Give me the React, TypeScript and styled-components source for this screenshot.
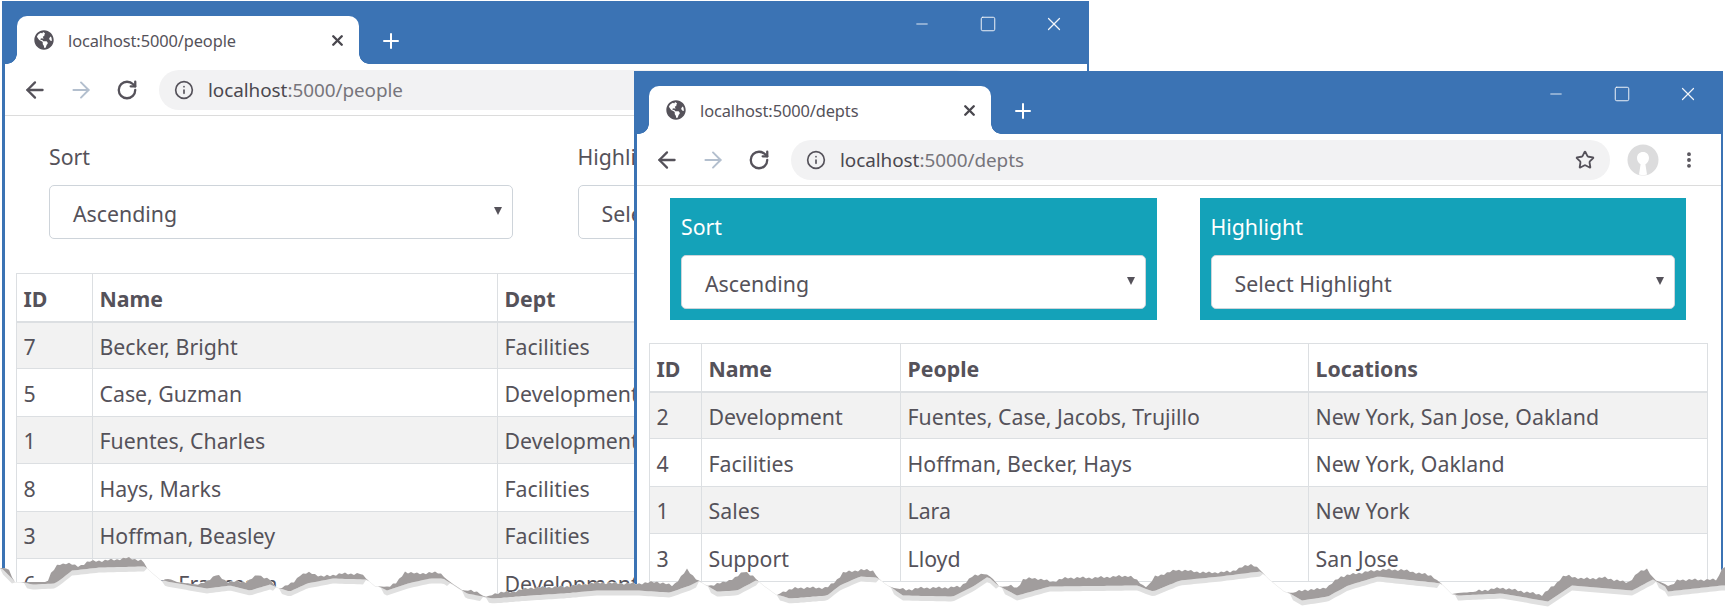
import React from "react";
import styled, { createGlobalStyle } from "styled-components";
import { ArrowLeft, ArrowRight, RotateCw, Info, Star, X, Plus, Minus, Square, EllipsisVertical } from "lucide-react";
import { FaGlobeAmericas } from "react-icons/fa";

const BLUE = "#3b73b4";
const TEXT = "#55525a";
const LINE = "#dcdfe2";

const Global = createGlobalStyle`
  html, body { margin: 0; padding: 0; background: #fff; }
  body { font-family: "Noto Sans", "Open Sans", sans-serif; color: ${TEXT}; }
`;

const Page = styled.div`
  position: relative;
  width: 1725px;
  height: 611px;
  overflow: hidden;
  background: #fff;
`;

const BrowserWindow = styled.section<{ $left: number; $top: number; $width: number }>`
  position: absolute;
  left: ${(p) => p.$left}px;
  top: ${(p) => p.$top}px;
  width: ${(p) => p.$width}px;
  height: 611px;
  box-sizing: border-box;
  border-left: 3px solid ${BLUE};
  border-right: 2px solid ${BLUE};
  background: #fff;
  display: flex;
  flex-direction: column;
`;

const TitleBar = styled.header`
  height: 63px;
  flex: none;
  background: ${BLUE};
  display: flex;
  padding-left: 12px;
`;

const Tab = styled.div`
  position: relative;
  align-self: flex-end;
  width: 342px;
  height: 48px;
  box-sizing: border-box;
  background: #fff;
  border-radius: 10px 10px 0 0;
  display: flex;
  align-items: center;
  padding: 0 13px 0 17px;
  gap: 14px;
  &::before, &::after {
    content: "";
    position: absolute;
    bottom: 0;
    width: 10px;
    height: 10px;
  }
  &::before { left: -10px; background: radial-gradient(circle at 0 0, ${BLUE} 9.5px, #fff 10px); }
  &::after { right: -10px; background: radial-gradient(circle at 100% 0, ${BLUE} 9.5px, #fff 10px); }
`;

const TabTitle = styled.span`
  font-size: 16.4px;
  flex: 1;
  color: ${TEXT};
  letter-spacing: -0.1px;
  white-space: nowrap;
`;

const NewTab = styled.div`
  align-self: flex-end;
  height: 46px;
  display: flex;
  align-items: center;
  margin-left: 20px;
  color: #fff;
`;

const Controls = styled.div`
  margin-left: auto;
  height: 46px;
  display: flex;
  color: #f2f5f9;
`;

const ControlButton = styled.div`
  width: 66px;
  display: flex;
  align-items: center;
  justify-content: center;
`;

const Toolbar = styled.div`
  height: 52px;
  flex: none;
  box-sizing: border-box;
  border-bottom: 1px solid #dcdcdc;
  display: flex;
  align-items: center;
  padding: 0 22px 0 7px;
`;

const NavButton = styled.div<{ $muted?: boolean }>`
  width: 46px;
  display: flex;
  justify-content: center;
  color: ${(p) => (p.$muted ? "#b3bfce" : "#55525a")};
`;

const Address = styled.div`
  flex: 1;
  height: 40px;
  margin-left: 9px;
  box-sizing: border-box;
  background: #f2f2f3;
  border-radius: 20px;
  display: flex;
  align-items: center;
  padding: 0 15px 0 15px;
  gap: 14px;
  color: #55525a;
`;

const Url = styled.span`
  flex: 1;
  font-size: 18.9px;
  letter-spacing: -0.05px;
  white-space: nowrap;
  color: #77757b;
  & b { font-weight: 400; color: #4a484f; }
`;

const Avatar = styled.div`
  width: 32px;
  height: 32px;
  margin-left: 17px;
  display: flex;
`;

const Menu = styled.div`
  width: 20px;
  margin-left: 20px;
  display: flex;
  justify-content: center;
  color: #55525a;
`;

const Content = styled.main`
  padding: 12px 11px 0;
`;

const Filters = styled.div`
  display: grid;
  grid-template-columns: 1fr 1fr;
  gap: 43px;
  padding: 0 24px 0 22px;
`;

const Panel = styled.div<{ $filled?: boolean }>`
  height: 122px;
  box-sizing: border-box;
  padding: 11px 11px 10px;
  background: ${(p) => (p.$filled ? "#14a2b9" : "transparent")};
  color: ${(p) => (p.$filled ? "#fff" : TEXT)};
  display: flex;
  flex-direction: column;
`;

const Label = styled.div`
  height: 46px;
  line-height: 36px;
  font-size: 21.3px;
`;

const SelectBox = styled.div`
  height: 54px;
  box-sizing: border-box;
  background: #fff;
  border: 1px solid #ced4da;
  border-radius: 5px;
  display: flex;
  align-items: center;
  justify-content: space-between;
  padding: 2px 10px 0 23px;
  color: ${TEXT};
  font-size: 21.3px;
`;

const Caret = styled.span`
  width: 0;
  height: 0;
  margin-bottom: 5px;
  border-left: 4px solid transparent;
  border-right: 4px solid transparent;
  border-top: 8px solid #55525a;
`;

const Table = styled.table<{ $inset?: boolean }>`
  margin: 23px 0 0 ${(p) => (p.$inset ? 1 : 0)}px;
  width: calc(100% - ${(p) => (p.$inset ? 3 : 0)}px);
  table-layout: fixed;
  border-collapse: collapse;
  font-size: 21.3px;
  color: ${TEXT};
`;

const Th = styled.th`
  height: 48px;
  padding: 2px 6.5px 0;
  box-sizing: border-box;
  border: 1px solid ${LINE};
  border-bottom-width: 2px;
  text-align: left;
  font-weight: 700;
  white-space: nowrap;
`;

const Td = styled.td`
  height: 47.4px;
  padding: 2px 6.5px 0;
  box-sizing: border-box;
  border: 1px solid ${LINE};
  white-space: nowrap;
`;

const Tr = styled.tr`
  tbody &:nth-child(odd) { background: #f2f2f2; }
`;

const TearLayer = styled.svg`
  position: absolute;
  left: 0;
  top: 0;
  width: 1725px;
  height: 611px;
`;

type Pt = [number, number];

const TOP: Pt[] = [[0,568],[8,568],[14,582],[25,582],[47,582],[50,575],[58,565],[67,563],[78,567],[88,562],[100,561],[115,560],[127,558],[143,561],[147,568],[157,577],[162,581],[167,578],[177,582],[200,585],[217,575],[227,582],[247,582],[258,575],[270,580],[277,588],[282,588],[293,583],[300,575],[310,573],[323,577],[340,574],[360,574],[368,580],[375,586],[387,587],[397,583],[405,572],[417,574],[430,573],[440,573],[445,578],[453,584],[462,590],[477,592],[485,597],[497,593],[513,592],[530,588],[563,587],[597,583],[637,584],[657,582],[673,586],[680,578],[687,570],[695,578],[700,581],[707,586],[723,583],[737,577],[745,571],[755,578],[763,585],[777,595],[783,592],[797,588],[827,588],[835,582],[843,573],[860,570],[873,571],[878,578],[887,585],[893,588],[907,590],[923,588],[942,588],[960,587],[972,577],[985,573],[992,578],[1000,587],[1010,586],[1017,588],[1023,580],[1033,578],[1052,582],[1067,578],[1093,578],[1130,576],[1140,583],[1147,588],[1155,577],[1177,570],[1207,573],[1230,572],[1252,564],[1260,570],[1270,580],[1285,592],[1292,593],[1305,590],[1315,590],[1328,587],[1340,577],[1360,573],[1380,570],[1402,570],[1432,576],[1442,584],[1452,594],[1458,593],[1472,592],[1502,588],[1542,595],[1555,585],[1562,577],[1568,576],[1582,579],[1605,578],[1628,583],[1638,573],[1647,569],[1655,580],[1665,584],[1672,586],[1678,580],[1712,580],[1718,580],[1721,568],[1725,568]];

const BOTTOM: Pt[] = [[0,568],[14,582],[33,586],[55,585],[62,580],[72,572],[100,569],[143,568],[147,568],[162,581],[167,583],[207,590],[230,587],[250,592],[270,586],[277,589],[290,593],[307,585],[333,580],[367,581],[375,586],[387,592],[408,585],[430,580],[443,580],[453,586],[467,595],[493,600],[530,597],[563,595],[597,592],[637,592],[670,594],[690,587],[700,582],[707,587],[717,593],[737,592],[758,581],[763,586],[777,596],[790,600],[827,597],[840,587],[860,578],[877,579],[887,586],[903,597],[953,598],[973,588],[988,578],[998,587],[1017,597],[1050,588],[1137,587],[1153,593],[1180,582],[1220,578],[1260,573],[1270,580],[1285,592],[1302,602],[1328,598],[1348,587],[1378,578],[1442,585],[1452,595],[1458,597],[1502,595],[1548,603],[1572,587],[1632,592],[1653,581],[1665,588],[1668,593],[1722,587],[1725,587]];

const at = (pts: Pt[], x: number) => {
  for (let i = 1; i < pts.length; i++) {
    if (x <= pts[i][0]) {
      const [x0, y0] = pts[i - 1];
      const [x1, y1] = pts[i];
      return y0 + ((y1 - y0) * (x - x0)) / Math.max(1, x1 - x0);
    }
  }
  return pts[pts.length - 1][1];
};

const samples = Array.from({ length: 576 }, (_, i) => {
  const x = Math.min(i * 3, 1725);
  const top = at(TOP, x);
  const band = Math.max(at(BOTTOM, x) - 1.5, top);
  const teeth = band - top > 3 ? [0, -1.5, 0.5, -0.5, 1, -1][i % 6] : 0;
  return { x, top: top + teeth, band, shade: band + (band - top > 1 ? 5 : 0.5) };
});

const line = (key: "top" | "band" | "shade") => samples.map((s) => `${s.x},${s[key].toFixed(1)}`);
const ribbon = (a: "top" | "band", b: "band" | "shade") => [...line(a), ...line(b).reverse()].join(" ");
const cover = [...line("top"), "1725,611", "0,611"].join(" ");

const Tear = () => (
  <TearLayer viewBox="0 0 1725 611">
    <polygon points={cover} fill="#fff" />
    <polygon points={ribbon("band", "shade")} fill="#e0e0e0" />
    <polygon points={ribbon("top", "band")} fill="#a19d9d" />
  </TearLayer>
);

const AvatarIcon = () => (
  <svg width="32" height="32" viewBox="0 0 32 32">
    <circle cx="16" cy="16" r="15.5" fill="#dcdcdd" />
    <path d="M16 8c-3.6 0-6 2.6-6 6 0 3 1.6 5.2 3.6 6.2L12 30.5c2.6 1 5.4 1 8 0l-1.6-10.3c2-1 3.6-3.2 3.6-6.2 0-3.4-2.4-6-6-6z" fill="#fff" />
  </svg>
);

type Row = string[];

interface BrowserProps {
  path: string;
  left: number;
  top: number;
  width: number;
  filled?: boolean;
  columns: number[];
  head: Row;
  rows: Row[];
}

const Browser = ({ path, left, top, width, filled, columns, head, rows }: BrowserProps) => (
  <BrowserWindow $left={left} $top={top} $width={width}>
    <TitleBar>
      <Tab>
        <FaGlobeAmericas size={20} color="#55525a" />
        <TabTitle>localhost:5000/{path}</TabTitle>
        <X size={17} strokeWidth={3.4} color="#4a484f" />
      </Tab>
      <NewTab>
        <Plus size={24} strokeWidth={2} />
      </NewTab>
      <Controls>
        <ControlButton><Minus size={18} strokeWidth={1.2} /></ControlButton>
        <ControlButton><Square size={18} strokeWidth={1.3} /></ControlButton>
        <ControlButton><X size={22} strokeWidth={1.3} /></ControlButton>
      </Controls>
    </TitleBar>
    <Toolbar>
      <NavButton><ArrowLeft size={26} strokeWidth={2.1} /></NavButton>
      <NavButton $muted><ArrowRight size={26} strokeWidth={1.8} /></NavButton>
      <NavButton><RotateCw size={22} strokeWidth={2.5} /></NavButton>
      <Address>
        <Info size={20} strokeWidth={2} />
        <Url><b>localhost</b>:5000/{path}</Url>
        <Star size={20} strokeWidth={2.2} />
      </Address>
      <Avatar><AvatarIcon /></Avatar>
      <Menu><EllipsisVertical size={22} strokeWidth={2.6} /></Menu>
    </Toolbar>
    <Content>
      <Filters>
        <Panel $filled={filled}>
          <Label>Sort</Label>
          <SelectBox>Ascending<Caret /></SelectBox>
        </Panel>
        <Panel $filled={filled}>
          <Label>Highlight</Label>
          <SelectBox>Select Highlight<Caret /></SelectBox>
        </Panel>
      </Filters>
      <Table $inset={filled}>
        <colgroup>
          {columns.map((w, i) => <col key={i} width={w} />)}
        </colgroup>
        <thead>
          <tr>{head.map((h) => <Th key={h}>{h}</Th>)}</tr>
        </thead>
        <tbody>
          {rows.map((r) => (
            <Tr key={r[0]}>{r.map((c, i) => <Td key={i}>{c}</Td>)}</Tr>
          ))}
        </tbody>
      </Table>
    </Content>
  </BrowserWindow>
);

export default function App() {
  return (
    <Page>
      <Global />
      <Browser
        path="people"
        left={2}
        top={1}
        width={1087}
        columns={[76, 405, 579]}
        head={["ID", "Name", "Dept"]}
        rows={[
          ["7", "Becker, Bright", "Facilities"],
          ["5", "Case, Guzman", "Development"],
          ["1", "Fuentes, Charles", "Development"],
          ["8", "Hays, Marks", "Facilities"],
          ["3", "Hoffman, Beasley", "Facilities"],
          ["6", "Trujillo, Francesca", "Development"],
        ]}
      />
      <Browser
        path="depts"
        left={634}
        top={71}
        width={1089}
        filled
        columns={[52, 199, 408, 399]}
        head={["ID", "Name", "People", "Locations"]}
        rows={[
          ["2", "Development", "Fuentes, Case, Jacobs, Trujillo", "New York, San Jose, Oakland"],
          ["4", "Facilities", "Hoffman, Becker, Hays", "New York, Oakland"],
          ["1", "Sales", "Lara", "New York"],
          ["3", "Support", "Lloyd", "San Jose"],
        ]}
      />
      <Tear />
    </Page>
  );
}
